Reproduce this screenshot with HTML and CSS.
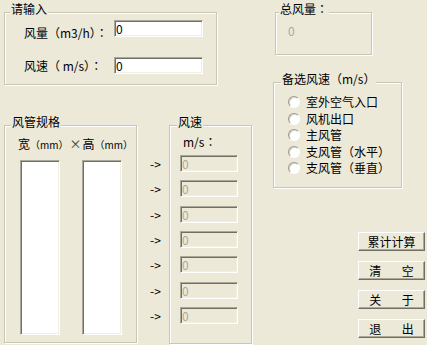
FILE: index.html
```html
<!DOCTYPE html>
<html>

<head>
  <meta charset="UTF-8" />
  <title>风管风速计算</title>
  <link rel="stylesheet" href="styles.css">
</head>

<body>

  <div class="dialog">

    <div class="left">

      <div class="group input-group">
        <div class="caption">请输入</div>
        <div class="field-grid">
          <label class="field-label first">风量（m3/h）<span class="colon">：</span></label>
          <input class="edit" type="text" value="0">
          <label class="field-label">风速（ m/s）<span class="colon">：</span></label>
          <input class="edit" type="text" value="0">
        </div>
      </div>

      <div class="bottom-row">

        <div class="group duct-group">
          <div class="caption">风管规格</div>
          <div class="duct-head">宽<span class="unit">（mm）</span><span class="times">×</span>高<span class="unit">（mm）</span></div>
          <div class="lists">
            <div class="listbox"></div>
            <div class="listbox"></div>
          </div>
        </div>

        <div class="arrows">
          <span>-&gt;</span>
          <span>-&gt;</span>
          <span>-&gt;</span>
          <span>-&gt;</span>
          <span>-&gt;</span>
          <span>-&gt;</span>
          <span>-&gt;</span>
        </div>

        <div class="group speed-group">
          <div class="caption">风速</div>
          <div class="speed-head">m/s<span class="colon">：</span></div>
          <div class="speed-list">
            <input class="edit off" type="text" value="0" disabled>
            <input class="edit off" type="text" value="0" disabled>
            <input class="edit off" type="text" value="0" disabled>
            <input class="edit off" type="text" value="0" disabled>
            <input class="edit off" type="text" value="0" disabled>
            <input class="edit off" type="text" value="0" disabled>
            <input class="edit off" type="text" value="0" disabled>
          </div>
        </div>

      </div>

    </div>

    <div class="right">

      <div class="group total-group">
        <div class="caption">总风量<span class="colon">：</span></div>
        <div class="total-value">0</div>
      </div>

      <div class="group choice-group">
        <div class="caption">备选风速（m/s）</div>
        <div class="choice-list">
          <label class="choice"><input type="radio" name="speed">室外空气入口</label>
          <label class="choice"><input type="radio" name="speed">风机出口</label>
          <label class="choice"><input type="radio" name="speed">主风管</label>
          <label class="choice"><input type="radio" name="speed">支风管（水平）</label>
          <label class="choice"><input type="radio" name="speed">支风管（垂直）</label>
        </div>
      </div>

      <div class="buttons">
        <button class="btn">累计计算</button>
        <button class="btn spread">清 空</button>
        <button class="btn spread">关 于</button>
        <button class="btn spread">退 出</button>
      </div>

    </div>

  </div>

</body>

</html>
```

FILE: styles.css
```css
  * {
    box-sizing: border-box;
  }

  body {
    margin: 0;
    background-color: #ece9d8;
    color: #000000;
    font: 12px/14px "Noto Sans CJK SC", "Liberation Sans", sans-serif;
  }

  /* centred full-width colon, as in the old dialog font */
  .colon {
    font-family: "Noto Sans CJK TC", "Noto Sans CJK SC", sans-serif;
  }

  .dialog {
    display: flex;
    width: 427px;
    height: 345px;
    overflow: hidden;
  }

  /* group boxes */
  .group {
    border: 1px solid #c9c6b6;
    box-shadow: inset 1px 1px #ffffff, 1px 1px #ffffff;
  }

  .caption {
    width: max-content;
    height: 14px;
    margin: -11px 0 -3px 5px;
    padding: 0 1px;
    background-color: #ece9d8;
  }

  /* edit boxes */
  .edit {
    display: block;
    height: 17px;
    margin: 0;
    padding: 0 0 0 1px;
    border: 1px solid;
    border-color: #aca899 #ffffff #ffffff #aca899;
    box-shadow: inset 1px 1px #716f64, inset -1px -1px #f1efe2;
    background-color: #ffffff;
    color: #000000;
    font: inherit;
    line-height: 15px;
  }

  .edit.off {
    width: 58px;
    background-color: #ece9d8;
    color: #aca899;
    -webkit-text-fill-color: #aca899;
    opacity: 1;
  }

  /* left side */
  .left {
    width: 252px;
    padding-left: 4px;
  }

  .input-group {
    width: 213px;
    height: 73px;
    margin-top: 12px;
  }

  .field-grid {
    display: grid;
    grid-template-columns: 90px 89px;
    row-gap: 20px;
    padding: 7px 0 0 19px;
  }

  .field-label {
    line-height: 17px;
    white-space: nowrap;
  }

  .field-label.first {
    margin: 4px 0 -4px;
  }

  .field-grid .edit {
    width: 89px;
  }

  .bottom-row {
    display: flex;
    align-items: flex-start;
    margin-top: 40px;
  }

  .duct-group {
    width: 133px;
    height: 218px;
  }

  .duct-group .caption {
    margin-left: 6px;
  }

  .duct-head {
    padding: 11px 0 0 13px;
    white-space: nowrap;
  }

  .unit {
    font-size: 10px;
  }

  .times {
    padding: 0 1px;
    color: #333333;
  }

  .lists {
    display: flex;
    gap: 22px;
    margin-top: 8px;
    padding-left: 15px;
  }

  .listbox {
    width: 40px;
    height: 175px;
    border: 1px solid;
    border-color: #aca899 #ffffff #ffffff #aca899;
    box-shadow: inset 1px 1px #716f64, inset -1px -1px #f1efe2;
    background-color: #ffffff;
  }

  .arrows {
    display: flex;
    flex-direction: column;
    gap: 8.33px;
    width: 19px;
    margin-left: 13px;
    padding-top: 30px;
  }

  .arrows span {
    height: 17px;
    line-height: 17px;
    white-space: nowrap;
  }

  .speed-group {
    width: 83px;
    height: 219px;
  }

  .speed-group .caption {
    margin-left: 7px;
  }

  .speed-head {
    padding: 9px 0 0 13px;
  }

  .speed-list {
    display: flex;
    flex-direction: column;
    gap: 8.33px;
    margin-top: 6px;
    padding-left: 10px;
  }

  /* right side */
  .right {
    display: flex;
    flex-direction: column;
    width: 154px;
    margin-left: 21px;
  }

  .total-group {
    width: 97px;
    height: 43px;
    margin: 12px 0 0 2px;
  }

  .total-group .caption {
    margin-left: 3px;
  }

  .total-value {
    padding: 11px 0 0 12px;
    color: #aca899;
  }

  .choice-group {
    width: 129px;
    height: 106px;
    margin-top: 27px;
  }

  .choice-group .caption {
    margin-left: 7px;
  }

  .choice-list {
    display: flex;
    flex-direction: column;
    padding: 11px 0 0 14px;
  }

  .choice {
    display: flex;
    align-items: center;
    gap: 6px;
    height: 16.5px;
    white-space: nowrap;
  }

  .choice input {
    appearance: none;
    width: 12px;
    height: 12px;
    margin: 0;
    border: 1px solid;
    border-color: #9d9b8e #ffffff #ffffff #9d9b8e;
    border-radius: 50%;
    box-shadow: inset 1px 1px #d8d5c6;
    background-color: #ffffff;
  }

  .buttons {
    display: flex;
    flex-direction: column;
    gap: 10px;
    margin: 44px 0 0 85px;
  }

  .btn {
    width: 67px;
    height: 19px;
    padding: 0;
    border: 1px solid;
    border-color: #ffffff #716f64 #716f64 #ffffff;
    box-shadow: inset -1px -1px #aca899;
    background-color: #ece9d8;
    color: #000000;
    font: inherit;
    line-height: 16px;
  }

  .btn.spread {
    word-spacing: 18px;
  }
```
